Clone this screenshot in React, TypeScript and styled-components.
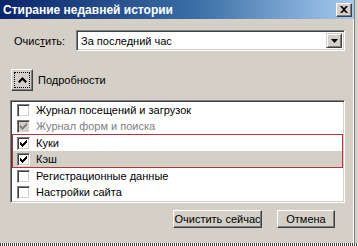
import React from "react";
import styled, { createGlobalStyle } from "styled-components";

const GlobalStyle = createGlobalStyle`
  html, body {
    margin: 0;
    padding: 0;
    background: #d4d0c8;
  }
  body {
    width: 358px;
    height: 246px;
    overflow: hidden;
    font-family: "Liberation Sans", sans-serif;
    font-size: 11px;
    color: #000;
    white-space: nowrap;
  }
`;

const Window = styled.div`
  width: 354px;
  height: 243px;
  background: #d4d0c8;
  border-right: 1px solid #808080;
  box-shadow: inset -1px 0 0 #ffffff;
  display: flex;
  flex-direction: column;
  position: relative;
`;

const TitleBar = styled.div`
  height: 19px;
  display: flex;
  align-items: center;
  justify-content: space-between;
  padding: 0 2px 0 3px;
  background: linear-gradient(90deg, #0a246a 0%, #3a6ea5 55%, #a6caf0 100%);
`;

const Title = styled.span`
  color: #fff;
  font-weight: bold;
  font-size: 12px;
`;

const CloseButton = styled.div`
  width: 16px;
  height: 14px;
  box-sizing: border-box;
  background: #d4d0c8;
  border: 1px solid;
  border-color: #ffffff #404040 #404040 #ffffff;
  box-shadow: inset -1px -1px 0 #808080;
  display: flex;
  align-items: center;
  justify-content: center;
`;

const Body = styled.div`
  flex: 1;
  display: flex;
  flex-direction: column;
  padding: 11px 9px 0 10px;
`;

const ClearRow = styled.div`
  display: flex;
  align-items: center;
  height: 21px;
`;

const Label = styled.span`
  width: 66px;
  padding-left: 4px;
  box-sizing: border-box;
`;

const Select = styled.div`
  flex: 1;
  height: 21px;
  box-sizing: border-box;
  background: #fff;
  border: 1px solid;
  border-color: #808080 #ffffff #ffffff #808080;
  box-shadow: inset 1px 1px 0 #404040, inset -1px -1px 0 #d4d0c8;
  display: flex;
  align-items: center;
  justify-content: space-between;
  padding: 2px 2px 2px 4px;
`;

const DropButton = styled.div`
  width: 16px;
  height: 15px;
  box-sizing: border-box;
  background: #d4d0c8;
  border: 1px solid;
  border-color: #d4d0c8 #404040 #404040 #d4d0c8;
  box-shadow: inset 1px 1px 0 #ffffff, inset -1px -1px 0 #808080;
  display: flex;
  align-items: center;
  justify-content: center;
`;

const DetailsRow = styled.div`
  display: flex;
  align-items: center;
  gap: 5px;
  margin-top: 18px;
  padding-left: 1px;
`;

const ToggleButton = styled.div`
  width: 22px;
  height: 22px;
  box-sizing: border-box;
  background: #d4d0c8;
  border: 1px solid;
  border-color: #ffffff #404040 #404040 #ffffff;
  box-shadow: inset -1px -1px 0 #808080;
  padding: 2px;
`;

const FocusRect = styled.div`
  width: 100%;
  height: 100%;
  box-sizing: border-box;
  border: 1px dotted #000;
  display: flex;
  align-items: center;
  justify-content: center;
`;

const ListBox = styled.div`
  margin-top: 9px;
  height: 103px;
  box-sizing: border-box;
  background: #fff;
  border: 1px solid;
  border-color: #808080 #ffffff #ffffff #808080;
  box-shadow: inset 1px 1px 0 #404040, inset -1px -1px 0 #d4d0c8;
  padding: 1px 2px 2px 2px;
  display: flex;
  flex-direction: column;
`;

const Marked = styled.div`
  border: 1px solid #b8323c;
  margin: 0 -1px 0 -1px;
  display: flex;
  flex-direction: column;
`;

const Item = styled.div<{ $selected?: boolean; $disabled?: boolean }>`
  height: 16px;
  display: flex;
  align-items: center;
  gap: 6px;
  padding-left: 4px;
  background: ${({ $selected }) => ($selected ? "#d4d0c8" : "transparent")};
  color: ${({ $disabled }) => ($disabled ? "#808080" : "#000")};
`;

const Box = styled.div<{ $disabled?: boolean }>`
  width: 13px;
  height: 13px;
  box-sizing: border-box;
  background: ${({ $disabled }) => ($disabled ? "#d4d0c8" : "#fff")};
  border: 1px solid;
  border-color: #808080 #ffffff #ffffff #808080;
  box-shadow: inset 1px 1px 0 #404040, inset -1px -1px 0 #d4d0c8;
  display: flex;
  align-items: center;
  justify-content: center;
`;

const Footer = styled.div`
  display: flex;
  justify-content: flex-end;
  gap: 15px;
  margin-top: 7px;
  padding-right: 10px;
`;

const Button = styled.div<{ $w: number }>`
  width: ${({ $w }) => $w}px;
  height: 18px;
  box-sizing: border-box;
  background: #d4d0c8;
  border: 1px solid;
  border-color: #ffffff #404040 #404040 #ffffff;
  box-shadow: inset -1px -1px 0 #808080;
  display: flex;
  align-items: center;
  justify-content: center;
`;

const BottomEdge = styled.div`
  position: absolute;
  left: 0;
  right: -4px;
  bottom: -3px;
  height: 3px;
  background-image: repeating-linear-gradient(90deg, #404040 0 1px, #ffffff 1px 2px);
`;

const Check = ({ color = "#000" }: { color?: string }) => (
  <svg width="7" height="7" viewBox="0 0 7 7" shapeRendering="crispEdges">
    <path d="M6 0h1v3h-1v1h-1v1h-1v1h-1v1h-1v-1h-1v-1h-1v-3h1v1h1v1h1v-1h1v-1h1z" fill={color} />
  </svg>
);

type Entry = { label: string; checked?: boolean; disabled?: boolean };

const before: Entry[] = [
  { label: "Журнал посещений и загрузок" },
  { label: "Журнал форм и поиска", checked: true, disabled: true },
];

const after: Entry[] = [
  { label: "Регистрационные данные" },
  { label: "Настройки сайта" },
];

const Row = ({ e, selected }: { e: Entry; selected?: boolean }) => (
  <Item $disabled={e.disabled} $selected={selected}>
    <Box $disabled={e.disabled}>
      {e.checked && <Check color={e.disabled ? "#808080" : "#000"} />}
    </Box>
    <span>{e.label}</span>
  </Item>
);

export default function App() {
  return (
    <>
      <GlobalStyle />
      <Window>
        <TitleBar>
          <Title>Стирание недавней истории</Title>
          <CloseButton>
            <svg width="8" height="7" viewBox="0 0 8 7">
              <path d="M0 0h2l2 2 2-2h2L5 3.5 8 7H6L4 5 2 7H0l3-3.5z" fill="#000" />
            </svg>
          </CloseButton>
        </TitleBar>
        <Body>
          <ClearRow>
            <Label>
              Очис<u>т</u>ить:
            </Label>
            <Select>
              <span>За последний час</span>
              <DropButton>
                <svg width="7" height="4" viewBox="0 0 7 4">
                  <path d="M0 0h7L3.5 4z" fill="#000" />
                </svg>
              </DropButton>
            </Select>
          </ClearRow>
          <DetailsRow>
            <ToggleButton>
              <FocusRect>
                <svg width="9" height="6" viewBox="0 0 9 6">
                  <path d="M0 4.5 L4.5 0 L9 4.5 L7.5 6 L4.5 3 L1.5 6 Z" fill="#000" />
                </svg>
              </FocusRect>
            </ToggleButton>
            <span>
              По<u>д</u>робности
            </span>
          </DetailsRow>
          <ListBox>
            {before.map((e) => (
              <Row key={e.label} e={e} />
            ))}
            <Marked>
              <Row e={{ label: "Куки", checked: true }} />
              <Row e={{ label: "Кэш", checked: true }} selected />
            </Marked>
            {after.map((e) => (
              <Row key={e.label} e={e} />
            ))}
          </ListBox>
          <Footer>
            <Button $w={89}>Очистить сейчас</Button>
            <Button $w={58}>Отмена</Button>
          </Footer>
        </Body>
        <BottomEdge />
      </Window>
    </>
  );
}
